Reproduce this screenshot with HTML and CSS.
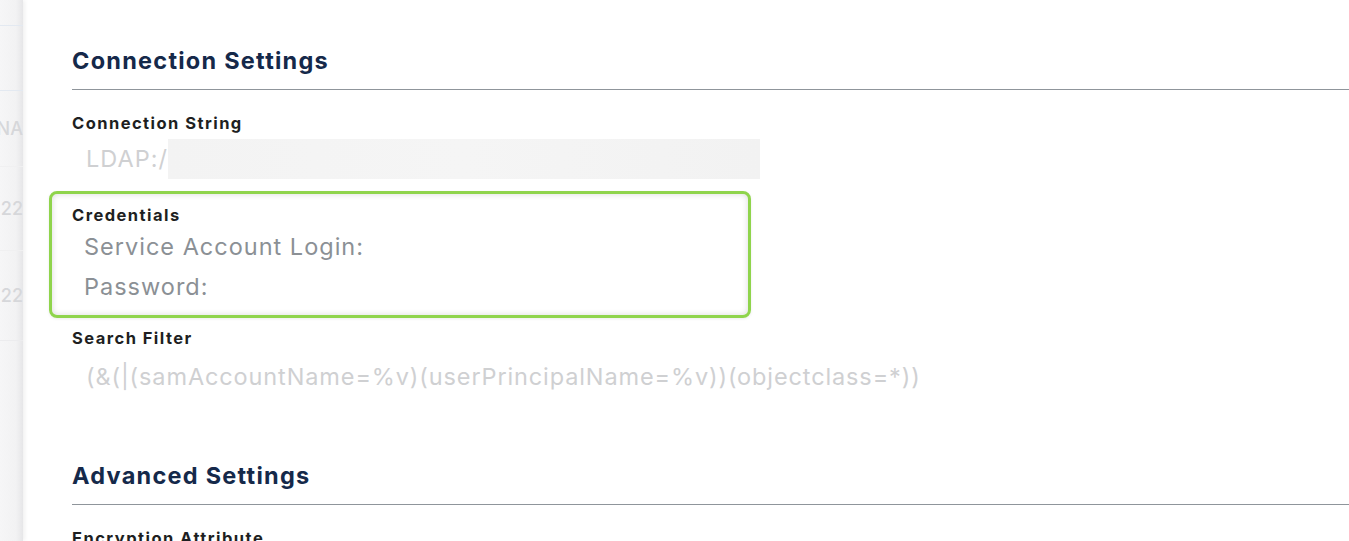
FILE: index.html
```html
<!DOCTYPE html>
<html>
<head>
<meta charset="utf-8">
<link rel="stylesheet" href="styles.css">
</head>
<body>
<div class="page">
  <aside class="side">
    <div class="side-row r1"></div>
    <div class="side-row r2"></div>
    <div class="side-row r3"><span>NA</span></div>
    <div class="side-row r4"><span>22</span></div>
    <div class="side-row r5"><span>22</span></div>
  </aside>
  <main class="main">
    <section class="section">
      <h2 class="section-title">Connection Settings</h2>
      <div class="field">
        <div class="label">Connection String</div>
        <div class="value conn"><span class="faint">LDAP:/</span><span class="redact"></span></div>
      </div>
      <div class="field highlight">
        <div class="label">Credentials</div>
        <div class="value cred">Service Account Login:</div>
        <div class="value cred">Password:</div>
      </div>
      <div class="field">
        <div class="label">Search Filter</div>
        <div class="value faint filter">(&amp;(|(samAccountName=%v)(userPrincipalName=%v))(objectclass=*))</div>
      </div>
    </section>
    <section class="section adv">
      <h2 class="section-title">Advanced Settings</h2>
      <div class="field">
        <div class="label">Encryption Attribute</div>
      </div>
    </section>
  </main>
</div>
</body>
</html>
```
FILE: styles.css
```css
* { box-sizing: border-box; }
html, body { margin: 0; padding: 0; background: #fff; }
body { font-family: Inter, "Noto Sans", sans-serif; overflow: hidden; height: 541px; }
.page { display: flex; height: 541px; }
.side {
  width: 23px; flex: none;
  background: linear-gradient(to right, #f6f6f7 0%, #f2f2f3 70%, #e6e6e8 100%);
  box-shadow: 2px 0 4px rgba(0,0,0,0.06);
  display: flex; flex-direction: column;
  overflow: hidden;
  color: #d6d7da; font-size: 18px; font-weight: 500;
}
.side-row { border-bottom: 1px solid #e3e9f1; display: flex; align-items: center; justify-content: flex-end; }
.side-row span { margin-right: 0; }
.r1 { height: 26px; }
.r2 { height: 65px; }
.r3 { height: 76px; border-bottom-color: #f0f0f1; }
.r4 { height: 84px; border-bottom-color: #f0f0f1; }
.r5 { height: 90px; border-bottom-color: #ececee; }
.main { flex: 1; padding-left: 49px; }
.section { padding-top: 46px; }
.section.adv { padding-top: 70px; }
.section-title {
  margin: 0; padding-bottom: 13px;
  font-size: 23.5px; line-height: 30px; font-weight: 700; color: #15294a;
  letter-spacing: 1.25px;
  border-bottom: 1.5px solid #8f959b;
}
.field { padding-top: 24px; }
.label { font-size: 16.5px; font-weight: 700; color: #1e1f22; line-height: 18px; letter-spacing: 1.45px; }
.value { font-size: 23.5px; line-height: 28px; padding-left: 14px; letter-spacing: 1px; }
.conn { display: flex; align-items: center; margin-top: 7px; height: 40px; }
.faint { color: #cfd0d2; }
.filter { letter-spacing: 0.88px; }
.redact { width: 592px; height: 40px; background: linear-gradient(to right, #f3f3f3, #f5f5f5 50%, #f2f2f2); margin-left: 0; }
.highlight {
  margin-left: -23px; width: 702px; margin-top: 12px;
  padding: 12px 0 8px 20px;
  border: 3px solid #8fd44c; border-radius: 8px;
  box-shadow: inset 0 0 6px rgba(0,0,0,0.15), 0 1px 3px rgba(0,0,0,0.08);
}
.highlight .label { margin-bottom: 3px; }
.cred { color: #8b9095; padding-left: 12px; line-height: 40px; height: 40px; letter-spacing: 1px; }
.highlight + .field { padding-top: 11px; }
.filter { margin-top: 16px; }
```
